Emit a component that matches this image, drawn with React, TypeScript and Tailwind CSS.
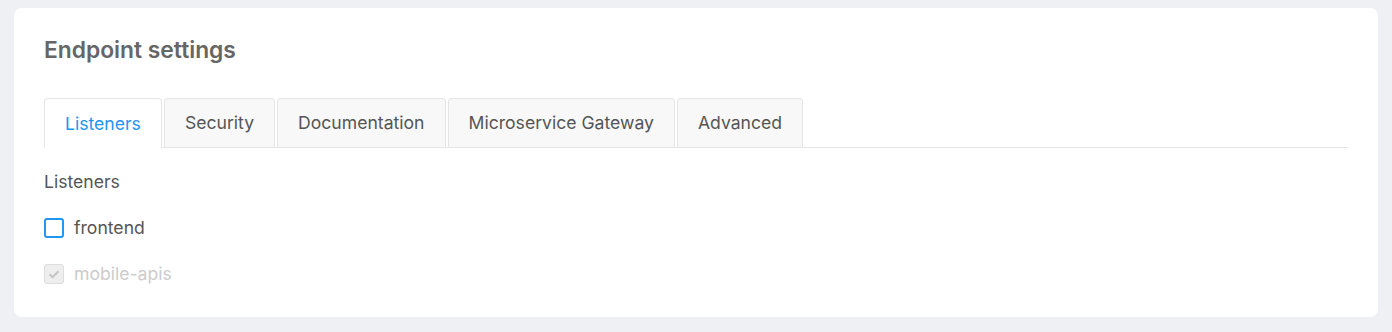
import { useState } from 'react';

const tabs = [
	'Listeners',
	'Security',
	'Documentation',
	'Microservice Gateway',
	'Advanced',
];

export default function App() {
	const [active, setActive] = useState('Listeners');
	const [frontend, setFrontend] = useState(false);

	return (
		<div
			className="min-h-[332px] bg-[#eff0f4] pt-2 pb-[15px] px-[14px]"
			style={{ fontFamily: 'Inter, "Liberation Sans", sans-serif' }}
		>
			<div className="bg-white rounded-lg px-[30px] pt-[27px] pb-[33px]">
				<h2 className="text-[22.8px] leading-[30px] font-semibold text-[#666]">
					Endpoint settings
				</h2>

				<div className="mt-[33px] flex items-end gap-[2px] border-b border-[#e6e6e6]">
					{tabs.map((tab) => {
						const isActive = tab === active;
						return (
							<button
								key={tab}
								onClick={() => setActive(tab)}
								className={
									isActive
										? 'h-[50px] pt-px px-[20px] -mb-px rounded-t border border-b-0 border-[#e6e6e6] bg-white text-[17.6px] text-[#2196f3]'
										: 'h-[49px] pt-px px-[20px] rounded-t border border-b-0 border-[#e6e6e6] bg-[#f8f8f8] text-[17.6px] text-[#555]'
								}
							>
								{tab}
							</button>
						);
					})}
				</div>

				<div className="mt-[23px] text-[17.6px] leading-[22px] text-[#555]">
					Listeners
				</div>

				<div className="mt-[25px] flex flex-col gap-[26px]">
					<label className="flex items-center gap-[10px] cursor-pointer">
						<span
							onClick={() => setFrontend(!frontend)}
							className="size-5 rounded-[3px] border-2 border-[#2196f3] bg-white flex items-center justify-center"
						>
							{frontend && (
								<svg viewBox="0 0 16 16" className="size-3.5 text-[#2196f3]">
									<path d="M3 8.5l3 3 7-7" fill="none" stroke="currentColor" strokeWidth={2} />
								</svg>
							)}
						</span>
						<span className="text-[17.6px] leading-[20px] text-[#555]">frontend</span>
					</label>

					<label className="flex items-center gap-[10px]">
						<span className="size-5 rounded-[3px] border border-[#ddd] bg-[#eee] flex items-center justify-center">
							<svg viewBox="0 0 16 16" className="size-4 text-[#c4c4c4]">
								<path d="M3.5 8.2l3 3 6-6" fill="none" stroke="currentColor" strokeWidth={2} />
							</svg>
						</span>
						<span className="text-[17.6px] leading-[20px] text-[#ccc]">mobile-apis</span>
					</label>
				</div>
			</div>
		</div>
	);
}
